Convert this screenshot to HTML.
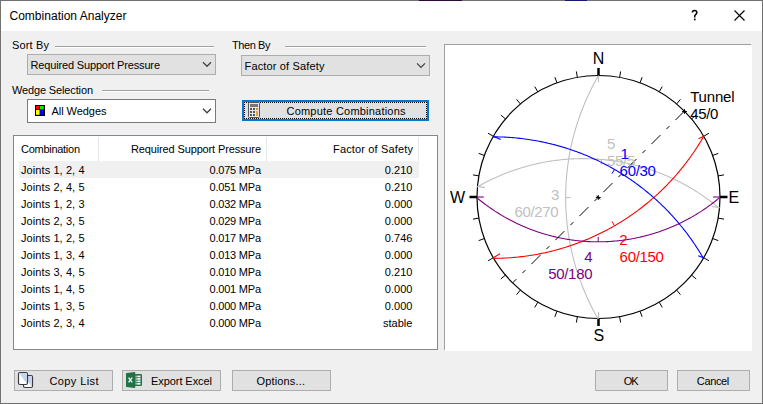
<!DOCTYPE html>
<html><head><meta charset="utf-8"><title>Combination Analyzer</title>
<style>html,body{margin:0;padding:0;background:#f0f0f0;overflow:hidden;width:763px;height:404px}svg{display:block}text{font-family:"Liberation Sans",sans-serif}</style>
</head><body>
<svg width="763" height="404" viewBox="0 0 763 404" font-family="Liberation Sans, sans-serif"><rect x="0" y="0" width="763" height="404" fill="#f0f0f0"/>
<rect x="1" y="1" width="761" height="30" fill="#ffffff"/>
<rect x="0.5" y="0.5" width="762" height="403" fill="none" stroke="#717171"/>
<rect x="419" y="0" width="43" height="1" fill="#2b0b35"/>
<rect x="565" y="0" width="22" height="1" fill="#141a70"/>
<text x="9.5" y="20" font-size="12" fill="#000" textLength="117" lengthAdjust="spacing">Combination Analyzer</text>
<path d="M692.4 12.6 Q692.4 10.5 694.6 10.5 Q696.8 10.5 696.8 12.6 Q696.8 13.9 695.6 14.7 Q694.7 15.3 694.7 16.6 L694.7 17.4" stroke="#000" stroke-width="1.6" fill="none"/>
<rect x="693.9" y="18.6" width="1.7" height="1.7" fill="#000"/>
<path d="M734.5 10.5 L744.5 20.5 M744.5 10.5 L734.5 20.5" stroke="#000" stroke-width="1.1" fill="none"/>
<text x="12" y="49" font-size="11" fill="#000" textLength="37" lengthAdjust="spacing">Sort By</text>
<rect x="55" y="46" width="159" height="1" fill="#a0a0a0"/>
<rect x="55" y="47" width="159" height="1" fill="#ffffff"/>
<text x="232" y="49" font-size="11" fill="#000" textLength="38.5" lengthAdjust="spacing">Then By</text>
<rect x="285" y="46" width="141" height="1" fill="#a0a0a0"/>
<rect x="285" y="47" width="141" height="1" fill="#ffffff"/>
<text x="12" y="94" font-size="11" fill="#000" textLength="81" lengthAdjust="spacing">Wedge Selection</text>
<rect x="102" y="90" width="107" height="1" fill="#a0a0a0"/>
<rect x="102" y="91" width="107" height="1" fill="#ffffff"/>
<rect x="27.5" y="54.5" width="188" height="20" fill="#e1e1e1" stroke="#adadad" stroke-width="1"/>
<text x="30.5" y="69" font-size="11" fill="#000" textLength="129.5" lengthAdjust="spacing">Required Support Pressure</text>
<path d="M203 62.3 L207 66.3 L211 62.3" stroke="#404040" stroke-width="1.25" fill="none"/>
<rect x="241.5" y="55.5" width="188" height="20" fill="#e1e1e1" stroke="#adadad" stroke-width="1"/>
<text x="244.5" y="69.5" font-size="11" fill="#000" textLength="80" lengthAdjust="spacing">Factor of Safety</text>
<path d="M417 63.39999999999999 L421 67.39999999999999 L425 63.39999999999999" stroke="#404040" stroke-width="1.25" fill="none"/>
<rect x="27.5" y="99.5" width="188" height="23" fill="#ffffff" stroke="#7a7a7a" stroke-width="1"/>
<rect x="35" y="105" width="10" height="11" fill="#000"/>
<rect x="36" y="106" width="3.6" height="3.5" fill="#ff0000"/>
<rect x="40" y="106" width="3.8" height="3.5" fill="#00f000"/>
<rect x="36" y="110" width="3.6" height="4.8" fill="#ffff00"/>
<rect x="40" y="110" width="3.8" height="4.8" fill="#0000ff"/>
<text x="51.5" y="115" font-size="11" fill="#000" textLength="55" lengthAdjust="spacing">All Wedges</text>
<path d="M203 108.8 L207 112.8 L211 108.8" stroke="#404040" stroke-width="1.25" fill="none"/>
<rect x="243.0" y="101.0" width="185" height="19" fill="#e1e1e1" stroke="#0078d7" stroke-width="2"/>
<defs><pattern id="dots" patternUnits="userSpaceOnUse" width="2" height="2"><rect x="0" y="0" width="1" height="1" fill="#000"/><rect x="1" y="1" width="1" height="1" fill="#000"/></pattern></defs>
<rect x="244" y="102" width="183" height="1" fill="url(#dots)"/>
<rect x="244" y="118" width="183" height="1" fill="url(#dots)"/>
<rect x="244" y="102" width="1" height="17" fill="url(#dots)"/>
<rect x="426" y="102" width="1" height="17" fill="url(#dots)"/>
<rect x="248.5" y="102.5" width="11" height="15" rx="1" fill="#e8e8e8" stroke="#555"/>
<rect x="250" y="104" width="8" height="3" fill="#777"/>
<rect x="250" y="108" width="2" height="2" fill="#555"/>
<rect x="253" y="108" width="2" height="2" fill="#555"/>
<rect x="250" y="111" width="2" height="2" fill="#555"/>
<rect x="253" y="111" width="2" height="2" fill="#555"/>
<rect x="250" y="114" width="2" height="2" fill="#555"/>
<rect x="253" y="114" width="2" height="2" fill="#555"/>
<rect x="256" y="108" width="2" height="2" fill="#f08020"/>
<rect x="256" y="111" width="2" height="5" fill="#f0a030"/>
<text x="286.5" y="114.5" font-size="11" fill="#000" textLength="119" lengthAdjust="spacing">Compute Combinations</text>
<rect x="13.5" y="135.5" width="424" height="214" fill="#ffffff" stroke="#828790" stroke-width="1"/>
<rect x="98" y="137" width="1" height="24" fill="#e5e5e5"/>
<rect x="266" y="137" width="1" height="24" fill="#e5e5e5"/>
<rect x="418" y="137" width="1" height="24" fill="#e5e5e5"/>
<text x="21" y="153" font-size="11" fill="#000" textLength="59" lengthAdjust="spacing">Combination</text>
<text x="131" y="153" font-size="11" fill="#000" textLength="130" lengthAdjust="spacing">Required Support Pressure</text>
<text x="333" y="153" font-size="11" fill="#000" textLength="80" lengthAdjust="spacing">Factor of Safety</text>
<rect x="19" y="161" width="400" height="17" fill="#f0f0f0"/>
<text x="21" y="174" font-size="11" fill="#000" textLength="63.5" lengthAdjust="spacing">Joints 1, 2, 4</text>
<text x="261" y="174" font-size="11" fill="#000" text-anchor="end" textLength="51.5" lengthAdjust="spacing">0.075 MPa</text>
<text x="412.4" y="174" font-size="11" fill="#000" text-anchor="end">0.210</text>
<text x="21" y="191" font-size="11" fill="#000" textLength="63.5" lengthAdjust="spacing">Joints 2, 4, 5</text>
<text x="261" y="191" font-size="11" fill="#000" text-anchor="end" textLength="51.5" lengthAdjust="spacing">0.051 MPa</text>
<text x="412.4" y="191" font-size="11" fill="#000" text-anchor="end">0.210</text>
<text x="21" y="208" font-size="11" fill="#000" textLength="63.5" lengthAdjust="spacing">Joints 1, 2, 3</text>
<text x="261" y="208" font-size="11" fill="#000" text-anchor="end" textLength="51.5" lengthAdjust="spacing">0.032 MPa</text>
<text x="412.4" y="208" font-size="11" fill="#000" text-anchor="end">0.000</text>
<text x="21" y="225" font-size="11" fill="#000" textLength="63.5" lengthAdjust="spacing">Joints 2, 3, 5</text>
<text x="261" y="225" font-size="11" fill="#000" text-anchor="end" textLength="51.5" lengthAdjust="spacing">0.029 MPa</text>
<text x="412.4" y="225" font-size="11" fill="#000" text-anchor="end">0.000</text>
<text x="21" y="242" font-size="11" fill="#000" textLength="63.5" lengthAdjust="spacing">Joints 1, 2, 5</text>
<text x="261" y="242" font-size="11" fill="#000" text-anchor="end" textLength="51.5" lengthAdjust="spacing">0.017 MPa</text>
<text x="412.4" y="242" font-size="11" fill="#000" text-anchor="end">0.746</text>
<text x="21" y="259" font-size="11" fill="#000" textLength="63.5" lengthAdjust="spacing">Joints 1, 3, 4</text>
<text x="261" y="259" font-size="11" fill="#000" text-anchor="end" textLength="51.5" lengthAdjust="spacing">0.013 MPa</text>
<text x="412.4" y="259" font-size="11" fill="#000" text-anchor="end">0.000</text>
<text x="21" y="276" font-size="11" fill="#000" textLength="63.5" lengthAdjust="spacing">Joints 3, 4, 5</text>
<text x="261" y="276" font-size="11" fill="#000" text-anchor="end" textLength="51.5" lengthAdjust="spacing">0.010 MPa</text>
<text x="412.4" y="276" font-size="11" fill="#000" text-anchor="end">0.210</text>
<text x="21" y="293" font-size="11" fill="#000" textLength="63.5" lengthAdjust="spacing">Joints 1, 4, 5</text>
<text x="261" y="293" font-size="11" fill="#000" text-anchor="end" textLength="51.5" lengthAdjust="spacing">0.001 MPa</text>
<text x="412.4" y="293" font-size="11" fill="#000" text-anchor="end">0.000</text>
<text x="21" y="310" font-size="11" fill="#000" textLength="63.5" lengthAdjust="spacing">Joints 1, 3, 5</text>
<text x="261" y="310" font-size="11" fill="#000" text-anchor="end" textLength="51.5" lengthAdjust="spacing">0.000 MPa</text>
<text x="412.4" y="310" font-size="11" fill="#000" text-anchor="end">0.000</text>
<text x="21" y="327" font-size="11" fill="#000" textLength="63.5" lengthAdjust="spacing">Joints 2, 3, 4</text>
<text x="261" y="327" font-size="11" fill="#000" text-anchor="end" textLength="51.5" lengthAdjust="spacing">0.000 MPa</text>
<text x="412.4" y="327" font-size="11" fill="#000" text-anchor="end">stable</text>
<rect x="14.5" y="370.5" width="98" height="20" fill="#e1e1e1" stroke="#adadad" stroke-width="1"/>
<text x="49.5" y="385" font-size="11" fill="#000" textLength="49" lengthAdjust="spacing">Copy List</text>
<rect x="122.5" y="370.5" width="98" height="20" fill="#e1e1e1" stroke="#adadad" stroke-width="1"/>
<text x="151" y="385" font-size="11" fill="#000" textLength="61" lengthAdjust="spacing">Export Excel</text>
<rect x="232.5" y="370.5" width="98" height="20" fill="#e1e1e1" stroke="#adadad" stroke-width="1"/>
<text x="256.5" y="385" font-size="11" fill="#000" textLength="48.5" lengthAdjust="spacing">Options...</text>
<rect x="595.5" y="370.5" width="72" height="20" fill="#e1e1e1" stroke="#adadad" stroke-width="1"/>
<text x="623.8" y="385" font-size="11" fill="#000" textLength="14.8" lengthAdjust="spacing">OK</text>
<rect x="677.5" y="370.5" width="72" height="20" fill="#e1e1e1" stroke="#adadad" stroke-width="1"/>
<text x="696.8" y="385" font-size="11" fill="#000" textLength="32.5" lengthAdjust="spacing">Cancel</text>
<rect x="23.5" y="375.5" width="9" height="12" rx="1.5" fill="#fff" stroke="#3a3a44" stroke-width="1.2"/>
<path d="M24 376 H32 V387 Z" fill="#c8d4e8"/>
<rect x="18.5" y="372.5" width="9" height="12" rx="1.5" fill="#fff" stroke="#3a3a44" stroke-width="1.2"/>
<path d="M19 373 H27 V384 Z" fill="#c8d4e8"/>
<rect x="134" y="374" width="8" height="12" rx="1.2" fill="#217346"/>
<rect x="137.3" y="375.6" width="3.2" height="1.7" fill="#ffffff"/>
<rect x="135.3" y="375.6" width="1.6" height="1.7" fill="#b8cfc0"/>
<rect x="137.3" y="378.05" width="3.2" height="1.7" fill="#ffffff"/>
<rect x="135.3" y="378.05" width="1.6" height="1.7" fill="#b8cfc0"/>
<rect x="137.3" y="380.5" width="3.2" height="1.7" fill="#ffffff"/>
<rect x="135.3" y="380.5" width="1.6" height="1.7" fill="#b8cfc0"/>
<rect x="137.3" y="382.95000000000005" width="3.2" height="1.7" fill="#ffffff"/>
<rect x="135.3" y="382.95000000000005" width="1.6" height="1.7" fill="#b8cfc0"/>
<path d="M126 373.6 Q126 373 126.6 372.9 L134.6 371.9 L135.2 372.2 L135.2 387.8 L134.6 388.1 L126.6 387.1 Q126 387 126 386.4 Z" fill="#217346"/>
<path d="M128.6 377.6 L132.2 382.4 M132.2 377.6 L128.6 382.4" stroke="#fff" stroke-width="1.3"/>
<rect x="444" y="44" width="307" height="306" fill="#a0a0a0"/>
<rect x="445" y="45" width="307" height="306" fill="#ffffff"/>
<circle cx="598.5" cy="197.0" r="121.5" fill="none" stroke="#000" stroke-width="1.2"/>
<path d="M598.50 75.50 L598.50 68.00" stroke="#000" stroke-width="2.5"/>
<path d="M619.60 77.35 L620.64 71.44" stroke="#000" stroke-width="1"/>
<path d="M640.06 82.83 L642.11 77.19" stroke="#000" stroke-width="1"/>
<path d="M659.25 91.78 L662.25 86.58" stroke="#000" stroke-width="1"/>
<path d="M676.60 103.93 L680.46 99.33" stroke="#000" stroke-width="1"/>
<path d="M691.57 118.90 L696.17 115.04" stroke="#000" stroke-width="1"/>
<path d="M703.72 136.25 L708.92 133.25" stroke="#000" stroke-width="1"/>
<path d="M712.67 155.44 L718.31 153.39" stroke="#000" stroke-width="1"/>
<path d="M718.15 175.90 L724.06 174.86" stroke="#000" stroke-width="1"/>
<path d="M720.00 197.00 L727.50 197.00" stroke="#000" stroke-width="2.5"/>
<path d="M718.15 218.10 L724.06 219.14" stroke="#000" stroke-width="1"/>
<path d="M712.67 238.56 L718.31 240.61" stroke="#000" stroke-width="1"/>
<path d="M703.72 257.75 L708.92 260.75" stroke="#000" stroke-width="1"/>
<path d="M691.57 275.10 L696.17 278.96" stroke="#000" stroke-width="1"/>
<path d="M676.60 290.07 L680.46 294.67" stroke="#000" stroke-width="1"/>
<path d="M659.25 302.22 L662.25 307.42" stroke="#000" stroke-width="1"/>
<path d="M640.06 311.17 L642.11 316.81" stroke="#000" stroke-width="1"/>
<path d="M619.60 316.65 L620.64 322.56" stroke="#000" stroke-width="1"/>
<path d="M598.50 318.50 L598.50 326.00" stroke="#000" stroke-width="2.5"/>
<path d="M577.40 316.65 L576.36 322.56" stroke="#000" stroke-width="1"/>
<path d="M556.94 311.17 L554.89 316.81" stroke="#000" stroke-width="1"/>
<path d="M537.75 302.22 L534.75 307.42" stroke="#000" stroke-width="1"/>
<path d="M520.40 290.07 L516.54 294.67" stroke="#000" stroke-width="1"/>
<path d="M505.43 275.10 L500.83 278.96" stroke="#000" stroke-width="1"/>
<path d="M493.28 257.75 L488.08 260.75" stroke="#000" stroke-width="1"/>
<path d="M484.33 238.56 L478.69 240.61" stroke="#000" stroke-width="1"/>
<path d="M478.85 218.10 L472.94 219.14" stroke="#000" stroke-width="1"/>
<path d="M477.00 197.00 L469.50 197.00" stroke="#000" stroke-width="2.5"/>
<path d="M478.85 175.90 L472.94 174.86" stroke="#000" stroke-width="1"/>
<path d="M484.33 155.44 L478.69 153.39" stroke="#000" stroke-width="1"/>
<path d="M493.28 136.25 L488.08 133.25" stroke="#000" stroke-width="1"/>
<path d="M505.43 118.90 L500.83 115.04" stroke="#000" stroke-width="1"/>
<path d="M520.40 103.93 L516.54 99.33" stroke="#000" stroke-width="1"/>
<path d="M537.75 91.78 L534.75 86.58" stroke="#000" stroke-width="1"/>
<path d="M556.94 82.83 L554.89 77.19" stroke="#000" stroke-width="1"/>
<path d="M577.40 77.35 L576.36 71.44" stroke="#000" stroke-width="1"/>
<text x="598.65" y="64" font-size="16" fill="#000" text-anchor="middle">N</text>
<text x="598.8" y="340.6" font-size="16" fill="#000" text-anchor="middle">S</text>
<text x="450" y="202.6" font-size="16" fill="#000" textLength="16.6" lengthAdjust="spacing">W</text>
<text x="728.6" y="202.6" font-size="16" fill="#000">E</text>
<path d="M598.50 75.50 l0 6.8" stroke="#c0c0c0" stroke-width="1.1" fill="none"/>
<path d="M598.50 318.50 l0 -6.5" stroke="#c0c0c0" stroke-width="1.1" fill="none"/>
<path d="M477.46 186.41 l7.4 1.2" stroke="#c0c0c0" stroke-width="1.1" fill="none"/>
<path d="M719.54 207.59 l-8 -1.2" stroke="#c0c0c0" stroke-width="1.1" fill="none"/>
<path d="M703.72 136.25 l-5.2 2.4" stroke="#ff0000" stroke-width="1.1" fill="none"/>
<path d="M493.28 257.75 l6.7 -4" stroke="#ff0000" stroke-width="1.1" fill="none"/>
<path d="M477.00 197.00 l6.8 0" stroke="#800080" stroke-width="1.1" fill="none"/>
<path d="M720.00 197.00 l-6.8 0" stroke="#800080" stroke-width="1.1" fill="none"/>
<path d="M493.28 136.25 l7.4 3.2" stroke="#0000ff" stroke-width="1.1" fill="none"/>
<path d="M703.72 257.75 l-5.5 -2.1" stroke="#0000ff" stroke-width="1.1" fill="none"/>
<path d="M598.20 319.10 L597.16 317.27 L596.14 315.46 L595.16 313.67 L594.20 311.90 L593.28 310.14 L592.38 308.40 L591.50 306.68 L590.65 304.98 L589.83 303.29 L589.03 301.61 L588.25 299.95 L587.50 298.31 L586.76 296.68 L586.05 295.07 L585.36 293.47 L584.68 291.89 L584.03 290.32 L583.39 288.76 L582.77 287.21 L582.17 285.68 L581.59 284.16 L581.02 282.66 L580.46 281.16 L579.93 279.68 L579.40 278.21 L578.90 276.75 L578.40 275.31 L577.92 273.87 L577.46 272.44 L577.00 271.03 L576.56 269.62 L576.13 268.23 L575.72 266.84 L575.31 265.46 L574.92 264.10 L574.54 262.74 L574.17 261.39 L573.81 260.05 L573.45 258.72 L573.11 257.39 L572.78 256.07 L572.46 254.77 L572.15 253.46 L571.85 252.17 L571.56 250.88 L571.27 249.60 L571.00 248.33 L570.73 247.06 L570.47 245.80 L570.22 244.55 L569.98 243.30 L569.75 242.06 L569.52 240.82 L569.30 239.59 L569.09 238.37 L568.88 237.15 L568.69 235.93 L568.50 234.72 L568.31 233.52 L568.14 232.31 L567.97 231.12 L567.80 229.92 L567.65 228.74 L567.50 227.55 L567.35 226.37 L567.22 225.19 L567.08 224.02 L566.96 222.84 L566.84 221.68 L566.73 220.51 L566.62 219.35 L566.52 218.19 L566.42 217.03 L566.33 215.88 L566.25 214.72 L566.17 213.57 L566.10 212.42 L566.03 211.28 L565.97 210.13 L565.91 208.99 L565.86 207.84 L565.81 206.70 L565.77 205.56 L565.74 204.42 L565.71 203.28 L565.69 202.15 L565.67 201.01 L565.65 199.87 L565.65 198.74 L565.64 197.60 L565.65 196.46 L565.65 195.33 L565.67 194.19 L565.69 193.05 L565.71 191.92 L565.74 190.78 L565.77 189.64 L565.81 188.50 L565.86 187.36 L565.91 186.21 L565.97 185.07 L566.03 183.92 L566.10 182.78 L566.17 181.63 L566.25 180.48 L566.33 179.32 L566.42 178.17 L566.52 177.01 L566.62 175.85 L566.73 174.69 L566.84 173.52 L566.96 172.36 L567.08 171.18 L567.22 170.01 L567.35 168.83 L567.50 167.65 L567.65 166.46 L567.80 165.28 L567.97 164.08 L568.14 162.89 L568.31 161.68 L568.50 160.48 L568.69 159.27 L568.88 158.05 L569.09 156.83 L569.30 155.61 L569.52 154.38 L569.75 153.14 L569.98 151.90 L570.22 150.65 L570.47 149.40 L570.73 148.14 L571.00 146.87 L571.27 145.60 L571.56 144.32 L571.85 143.03 L572.15 141.74 L572.46 140.43 L572.78 139.13 L573.11 137.81 L573.45 136.48 L573.81 135.15 L574.17 133.81 L574.54 132.46 L574.92 131.10 L575.31 129.74 L575.72 128.36 L576.13 126.97 L576.56 125.58 L577.00 124.17 L577.46 122.76 L577.92 121.33 L578.40 119.89 L578.90 118.45 L579.40 116.99 L579.93 115.52 L580.46 114.04 L581.02 112.54 L581.59 111.04 L582.17 109.52 L582.77 107.99 L583.39 106.44 L584.03 104.88 L584.68 103.31 L585.36 101.73 L586.05 100.13 L586.76 98.52 L587.50 96.89 L588.25 95.25 L589.03 93.59 L589.83 91.91 L590.65 90.22 L591.50 88.52 L592.38 86.80 L593.28 85.06 L594.20 83.30 L595.16 81.53 L596.14 79.74 L597.16 77.93 L598.20 76.10" stroke="#c0c0c0" stroke-width="1.1" fill="none"/>
<path d="M565.64 197.60 L570.64 197.51" stroke="#c0c0c0" stroke-width="1" fill="none"/>
<path d="M477.16 187.01 L478.99 185.97 L480.80 184.96 L482.60 183.98 L484.38 183.03 L486.15 182.11 L487.90 181.21 L489.64 180.35 L491.37 179.51 L493.07 178.70 L494.77 177.92 L496.45 177.15 L498.12 176.42 L499.77 175.70 L501.41 175.01 L503.03 174.34 L504.65 173.68 L506.25 173.05 L507.84 172.44 L509.41 171.85 L510.98 171.28 L512.53 170.72 L514.07 170.19 L515.60 169.67 L517.11 169.16 L518.62 168.68 L520.11 168.20 L521.60 167.75 L523.07 167.31 L524.54 166.88 L525.99 166.47 L527.43 166.07 L528.87 165.68 L530.29 165.31 L531.71 164.95 L533.12 164.61 L534.51 164.27 L535.90 163.95 L537.28 163.64 L538.65 163.34 L540.02 163.05 L541.37 162.78 L542.72 162.51 L544.06 162.25 L545.40 162.01 L546.72 161.77 L548.04 161.55 L549.36 161.33 L550.66 161.13 L551.96 160.93 L553.25 160.74 L554.54 160.56 L555.82 160.39 L557.10 160.23 L558.37 160.08 L559.63 159.93 L560.89 159.80 L562.14 159.67 L563.39 159.55 L564.63 159.44 L565.87 159.33 L567.11 159.23 L568.34 159.14 L569.56 159.06 L570.78 158.99 L572.00 158.92 L573.22 158.86 L574.42 158.81 L575.63 158.76 L576.83 158.72 L578.03 158.69 L579.23 158.67 L580.42 158.65 L581.61 158.64 L582.80 158.63 L583.99 158.63 L585.17 158.64 L586.35 158.66 L587.53 158.68 L588.70 158.71 L589.88 158.74 L591.05 158.78 L592.22 158.83 L593.39 158.88 L594.56 158.94 L595.72 159.01 L596.89 159.08 L598.05 159.16 L599.22 159.25 L600.38 159.34 L601.54 159.44 L602.70 159.54 L603.86 159.65 L605.02 159.77 L606.18 159.89 L607.34 160.03 L608.50 160.16 L609.66 160.31 L610.82 160.46 L611.98 160.61 L613.14 160.78 L614.31 160.95 L615.47 161.12 L616.63 161.31 L617.80 161.50 L618.96 161.69 L620.13 161.90 L621.30 162.11 L622.47 162.33 L623.64 162.55 L624.82 162.78 L625.99 163.02 L627.17 163.27 L628.35 163.53 L629.53 163.79 L630.72 164.06 L631.90 164.34 L633.09 164.62 L634.29 164.91 L635.48 165.22 L636.68 165.53 L637.88 165.84 L639.09 166.17 L640.30 166.51 L641.51 166.85 L642.72 167.20 L643.94 167.56 L645.17 167.94 L646.39 168.32 L647.63 168.71 L648.86 169.11 L650.10 169.51 L651.35 169.93 L652.60 170.36 L653.85 170.81 L655.11 171.26 L656.38 171.72 L657.65 172.19 L658.93 172.68 L660.21 173.17 L661.50 173.68 L662.79 174.20 L664.09 174.73 L665.39 175.28 L666.71 175.84 L668.03 176.41 L669.35 177.00 L670.68 177.59 L672.02 178.21 L673.37 178.84 L674.72 179.48 L676.08 180.14 L677.45 180.81 L678.82 181.50 L680.20 182.21 L681.59 182.93 L682.99 183.68 L684.40 184.44 L685.81 185.21 L687.24 186.01 L688.67 186.83 L690.11 187.66 L691.56 188.52 L693.02 189.39 L694.48 190.29 L695.96 191.21 L697.44 192.16 L698.94 193.13 L700.44 194.12 L701.96 195.13 L703.48 196.18 L705.01 197.24 L706.55 198.34 L708.10 199.46 L709.67 200.62 L711.24 201.80 L712.82 203.01 L714.41 204.26 L716.01 205.53 L717.62 206.84 L719.24 208.19" stroke="#c0c0c0" stroke-width="1.1" fill="none"/>
<path d="M601.54 159.44 L601.14 164.42" stroke="#c0c0c0" stroke-width="1" fill="none"/>
<path d="M703.42 136.85 L702.36 138.67 L701.30 140.45 L700.24 142.20 L699.18 143.91 L698.13 145.59 L697.07 147.24 L696.02 148.86 L694.96 150.45 L693.91 152.01 L692.86 153.54 L691.82 155.04 L690.77 156.51 L689.73 157.96 L688.69 159.39 L687.65 160.79 L686.61 162.16 L685.58 163.52 L684.55 164.85 L683.52 166.15 L682.50 167.44 L681.47 168.71 L680.45 169.95 L679.44 171.18 L678.42 172.38 L677.41 173.57 L676.40 174.74 L675.39 175.89 L674.39 177.03 L673.39 178.14 L672.39 179.24 L671.39 180.33 L670.40 181.40 L669.40 182.45 L668.42 183.49 L667.43 184.51 L666.44 185.52 L665.46 186.52 L664.48 187.50 L663.50 188.47 L662.52 189.43 L661.55 190.37 L660.57 191.31 L659.60 192.23 L658.63 193.13 L657.67 194.03 L656.70 194.92 L655.74 195.79 L654.77 196.66 L653.81 197.51 L652.85 198.35 L651.89 199.19 L650.93 200.01 L649.97 200.83 L649.02 201.63 L648.06 202.43 L647.11 203.21 L646.15 203.99 L645.20 204.76 L644.25 205.52 L643.30 206.28 L642.34 207.02 L641.39 207.76 L640.44 208.49 L639.49 209.21 L638.54 209.93 L637.59 210.64 L636.63 211.34 L635.68 212.03 L634.73 212.72 L633.78 213.40 L632.82 214.08 L631.87 214.74 L630.92 215.40 L629.96 216.06 L629.00 216.71 L628.05 217.35 L627.09 217.99 L626.13 218.62 L625.17 219.25 L624.21 219.87 L623.24 220.48 L622.28 221.10 L621.31 221.70 L620.34 222.30 L619.37 222.89 L618.39 223.48 L617.42 224.07 L616.44 224.65 L615.46 225.22 L614.48 225.79 L613.49 226.36 L612.50 226.92 L611.51 227.48 L610.52 228.03 L609.52 228.58 L608.52 229.12 L607.52 229.66 L606.51 230.20 L605.50 230.73 L604.48 231.26 L603.46 231.78 L602.44 232.30 L601.41 232.81 L600.38 233.33 L599.35 233.83 L598.31 234.34 L597.26 234.84 L596.21 235.33 L595.16 235.82 L594.10 236.31 L593.03 236.80 L591.96 237.28 L590.88 237.75 L589.80 238.23 L588.71 238.70 L587.61 239.16 L586.51 239.63 L585.40 240.09 L584.29 240.54 L583.17 240.99 L582.04 241.44 L580.90 241.89 L579.76 242.33 L578.61 242.76 L577.45 243.20 L576.28 243.62 L575.11 244.05 L573.92 244.47 L572.73 244.89 L571.53 245.30 L570.32 245.71 L569.10 246.12 L567.87 246.52 L566.63 246.92 L565.38 247.31 L564.12 247.70 L562.84 248.09 L561.56 248.47 L560.27 248.85 L558.96 249.22 L557.65 249.59 L556.32 249.95 L554.97 250.31 L553.62 250.66 L552.25 251.01 L550.87 251.35 L549.48 251.69 L548.07 252.02 L546.65 252.35 L545.21 252.67 L543.76 252.99 L542.29 253.29 L540.80 253.60 L539.30 253.89 L537.79 254.18 L536.25 254.47 L534.70 254.74 L533.13 255.01 L531.54 255.27 L529.93 255.52 L528.31 255.77 L526.66 256.00 L524.99 256.23 L523.30 256.45 L521.60 256.66 L519.86 256.86 L518.11 257.05 L516.33 257.23 L514.53 257.39 L512.71 257.55 L510.86 257.69 L508.98 257.82 L507.08 257.94 L505.15 258.04 L503.20 258.14 L501.21 258.21 L499.20 258.27 L497.16 258.31 L495.08 258.34 L492.98 258.35" stroke="#ff0000" stroke-width="1.1" fill="none"/>
<path d="M614.48 225.79 L612.05 221.42" stroke="#ff0000" stroke-width="1" fill="none"/>
<path d="M719.70 197.60 L718.08 198.95 L716.46 200.25 L714.86 201.53 L713.26 202.77 L711.66 203.98 L710.08 205.16 L708.50 206.31 L706.93 207.42 L705.36 208.51 L703.81 209.57 L702.26 210.60 L700.72 211.61 L699.18 212.59 L697.66 213.54 L696.14 214.47 L694.63 215.37 L693.13 216.26 L691.64 217.11 L690.15 217.95 L688.67 218.77 L687.20 219.56 L685.73 220.33 L684.28 221.09 L682.83 221.82 L681.39 222.53 L679.95 223.23 L678.52 223.91 L677.10 224.57 L675.69 225.21 L674.28 225.83 L672.88 226.44 L671.49 227.04 L670.10 227.61 L668.72 228.17 L667.35 228.72 L665.98 229.25 L664.62 229.77 L663.26 230.27 L661.91 230.76 L660.57 231.24 L659.23 231.70 L657.89 232.15 L656.57 232.59 L655.24 233.01 L653.93 233.42 L652.62 233.82 L651.31 234.21 L650.01 234.58 L648.71 234.95 L647.42 235.30 L646.13 235.64 L644.85 235.98 L643.57 236.30 L642.29 236.61 L641.02 236.91 L639.75 237.20 L638.49 237.48 L637.23 237.75 L635.97 238.01 L634.72 238.26 L633.47 238.50 L632.23 238.73 L630.98 238.96 L629.74 239.17 L628.51 239.38 L627.27 239.57 L626.04 239.76 L624.81 239.94 L623.59 240.11 L622.36 240.27 L621.14 240.43 L619.92 240.57 L618.70 240.71 L617.49 240.84 L616.27 240.96 L615.06 241.07 L613.85 241.17 L612.64 241.27 L611.43 241.36 L610.23 241.44 L609.02 241.51 L607.82 241.58 L606.61 241.64 L605.41 241.68 L604.21 241.73 L603.00 241.76 L601.80 241.79 L600.60 241.81 L599.40 241.82 L598.20 241.82 L597.00 241.82 L595.80 241.81 L594.60 241.79 L593.40 241.76 L592.19 241.73 L590.99 241.68 L589.79 241.64 L588.58 241.58 L587.38 241.51 L586.17 241.44 L584.97 241.36 L583.76 241.27 L582.55 241.17 L581.34 241.07 L580.13 240.96 L578.91 240.84 L577.70 240.71 L576.48 240.57 L575.26 240.43 L574.04 240.27 L572.81 240.11 L571.59 239.94 L570.36 239.76 L569.13 239.57 L567.89 239.38 L566.66 239.17 L565.42 238.96 L564.17 238.73 L562.93 238.50 L561.68 238.26 L560.43 238.01 L559.17 237.75 L557.91 237.48 L556.65 237.20 L555.38 236.91 L554.11 236.61 L552.83 236.30 L551.55 235.98 L550.27 235.64 L548.98 235.30 L547.69 234.95 L546.39 234.58 L545.09 234.21 L543.78 233.82 L542.47 233.42 L541.16 233.01 L539.83 232.59 L538.51 232.15 L537.17 231.70 L535.83 231.24 L534.49 230.76 L533.14 230.27 L531.78 229.77 L530.42 229.25 L529.05 228.72 L527.68 228.17 L526.30 227.61 L524.91 227.04 L523.52 226.44 L522.12 225.83 L520.71 225.21 L519.30 224.57 L517.88 223.91 L516.45 223.23 L515.01 222.53 L513.57 221.82 L512.12 221.09 L510.67 220.33 L509.20 219.56 L507.73 218.77 L506.25 217.95 L504.76 217.11 L503.27 216.26 L501.77 215.37 L500.26 214.47 L498.74 213.54 L497.22 212.59 L495.68 211.61 L494.14 210.60 L492.59 209.57 L491.04 208.51 L489.47 207.42 L487.90 206.31 L486.32 205.16 L484.74 203.98 L483.14 202.77 L481.54 201.53 L479.94 200.25 L478.32 198.95 L476.70 197.60" stroke="#800080" stroke-width="1.1" fill="none"/>
<path d="M598.20 241.82 L598.23 236.82" stroke="#800080" stroke-width="1" fill="none"/>
<path d="M492.98 136.85 L495.08 136.86 L497.16 136.89 L499.20 136.93 L501.21 136.99 L503.20 137.06 L505.15 137.16 L507.08 137.26 L508.98 137.38 L510.86 137.51 L512.71 137.65 L514.53 137.81 L516.33 137.97 L518.11 138.15 L519.86 138.34 L521.60 138.54 L523.30 138.75 L524.99 138.97 L526.66 139.20 L528.31 139.43 L529.93 139.68 L531.54 139.93 L533.13 140.19 L534.70 140.46 L536.25 140.73 L537.79 141.02 L539.30 141.31 L540.80 141.60 L542.29 141.91 L543.76 142.21 L545.21 142.53 L546.65 142.85 L548.07 143.18 L549.48 143.51 L550.87 143.85 L552.25 144.19 L553.62 144.54 L554.97 144.89 L556.32 145.25 L557.65 145.61 L558.96 145.98 L560.27 146.35 L561.56 146.73 L562.84 147.11 L564.12 147.50 L565.38 147.89 L566.63 148.28 L567.87 148.68 L569.10 149.08 L570.32 149.49 L571.53 149.90 L572.73 150.31 L573.92 150.73 L575.11 151.15 L576.28 151.58 L577.45 152.00 L578.61 152.44 L579.76 152.87 L580.90 153.31 L582.04 153.76 L583.17 154.21 L584.29 154.66 L585.40 155.11 L586.51 155.57 L587.61 156.04 L588.71 156.50 L589.80 156.97 L590.88 157.45 L591.96 157.92 L593.03 158.40 L594.10 158.89 L595.16 159.38 L596.21 159.87 L597.26 160.36 L598.31 160.86 L599.35 161.37 L600.38 161.87 L601.41 162.39 L602.44 162.90 L603.46 163.42 L604.48 163.94 L605.50 164.47 L606.51 165.00 L607.52 165.54 L608.52 166.08 L609.52 166.62 L610.52 167.17 L611.51 167.72 L612.50 168.28 L613.49 168.84 L614.48 169.41 L615.46 169.98 L616.44 170.55 L617.42 171.13 L618.39 171.72 L619.37 172.31 L620.34 172.90 L621.31 173.50 L622.28 174.10 L623.24 174.72 L624.21 175.33 L625.17 175.95 L626.13 176.58 L627.09 177.21 L628.05 177.85 L629.00 178.49 L629.96 179.14 L630.92 179.80 L631.87 180.46 L632.82 181.12 L633.78 181.80 L634.73 182.48 L635.68 183.17 L636.63 183.86 L637.59 184.56 L638.54 185.27 L639.49 185.99 L640.44 186.71 L641.39 187.44 L642.34 188.18 L643.30 188.92 L644.25 189.68 L645.20 190.44 L646.15 191.21 L647.11 191.99 L648.06 192.77 L649.02 193.57 L649.97 194.37 L650.93 195.19 L651.89 196.01 L652.85 196.85 L653.81 197.69 L654.77 198.54 L655.74 199.41 L656.70 200.28 L657.67 201.17 L658.63 202.07 L659.60 202.97 L660.57 203.89 L661.55 204.83 L662.52 205.77 L663.50 206.73 L664.48 207.70 L665.46 208.68 L666.44 209.68 L667.43 210.69 L668.42 211.71 L669.40 212.75 L670.40 213.80 L671.39 214.87 L672.39 215.96 L673.39 217.06 L674.39 218.17 L675.39 219.31 L676.40 220.46 L677.41 221.63 L678.42 222.82 L679.44 224.02 L680.45 225.25 L681.47 226.49 L682.50 227.76 L683.52 229.05 L684.55 230.35 L685.58 231.68 L686.61 233.04 L687.65 234.41 L688.69 235.81 L689.73 237.24 L690.77 238.69 L691.82 240.16 L692.86 241.66 L693.91 243.19 L694.96 244.75 L696.02 246.34 L697.07 247.96 L698.13 249.61 L699.18 251.29 L700.24 253.00 L701.30 254.75 L702.36 256.53 L703.42 258.35" stroke="#0000ff" stroke-width="1.1" fill="none"/>
<path d="M614.48 169.41 L611.97 173.73" stroke="#0000ff" stroke-width="1" fill="none"/>
<path d="M684.41 111.09 L512.59 282.91" stroke="#000" stroke-width="1" stroke-dasharray="12.73 8.49 4.24 8.49"/>
<path d="M682.00 111.50 L687.00 111.50 M684.50 109.00 L684.50 114.00 M682.70 109.70 L686.30 113.30" stroke="#000" stroke-width="0.9"/>
<rect x="683.50" y="110.50" width="2" height="2" fill="#000"/>
<path d="M595.80 197.50 L600.80 197.50 M598.30 195.00 L598.30 200.00 M596.50 195.70 L600.10 199.30" stroke="#000" stroke-width="0.9"/>
<rect x="597.30" y="196.50" width="2" height="2" fill="#000"/>
<text x="690.2" y="102.2" font-size="15" fill="#000" textLength="44.3" lengthAdjust="spacing">Tunnel</text>
<text x="690.2" y="119" font-size="15" fill="#000" textLength="28.2" lengthAdjust="spacing">45/0</text>
<text x="607.1" y="149.4" font-size="15" fill="#c0c0c0">5</text>
<text x="607.1" y="166.2" font-size="15" fill="#c0c0c0" textLength="28.2" lengthAdjust="spacing">55/5</text>
<text x="620.4" y="158.8" font-size="15" fill="#0000ff">1</text>
<text x="619.6" y="176.3" font-size="15" fill="#0000ff" textLength="36.3" lengthAdjust="spacing">60/30</text>
<text x="551" y="199.8" font-size="15" fill="#c0c0c0">3</text>
<text x="514.4" y="216.6" font-size="15" fill="#c0c0c0" textLength="44.3" lengthAdjust="spacing">60/270</text>
<text x="619.3" y="245.2" font-size="15" fill="#ff0000">2</text>
<text x="619.6" y="261.8" font-size="15" fill="#ff0000" textLength="44.3" lengthAdjust="spacing">60/150</text>
<text x="584.2" y="261.8" font-size="15" fill="#800080">4</text>
<text x="548.2" y="278.6" font-size="15" fill="#800080" textLength="44.3" lengthAdjust="spacing">50/180</text></svg>
</body></html>
